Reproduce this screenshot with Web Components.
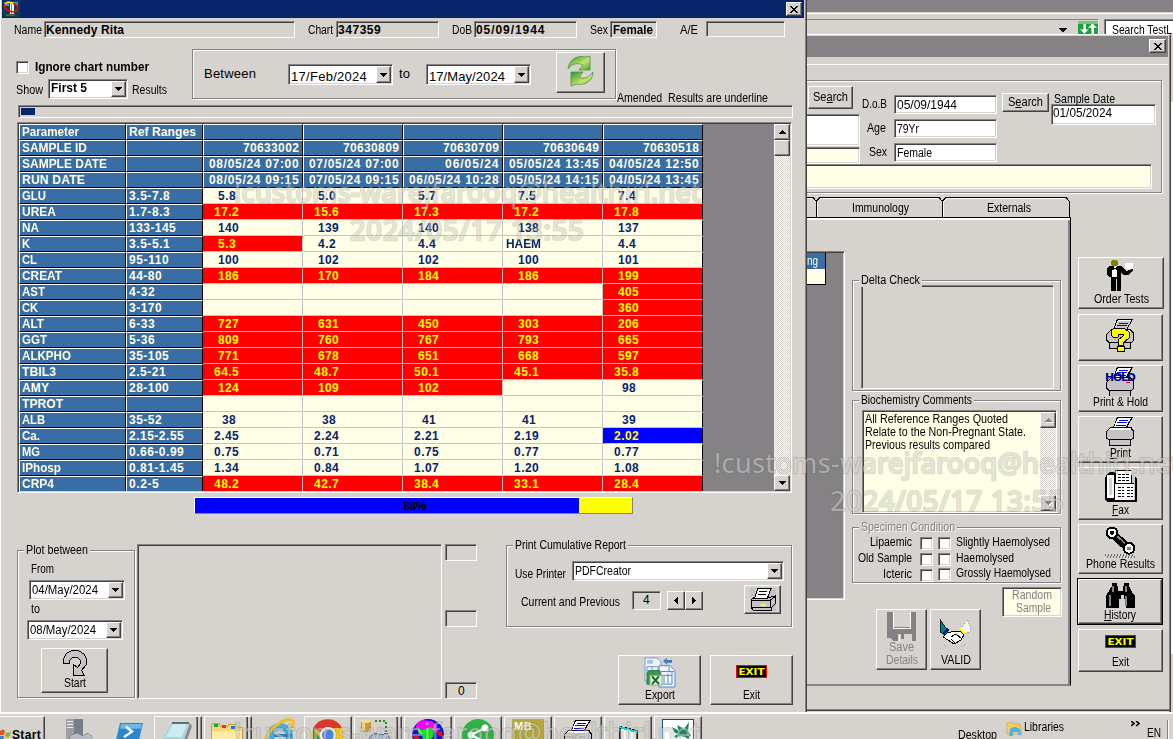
<!DOCTYPE html>
<html lang="en">
<head>
<meta charset="utf-8">
<title>Cumulative results</title>
<style>
html,body{margin:0;padding:0;width:1173px;height:739px;overflow:hidden;background:#d6d3ce;
font:12px/13px "Liberation Sans",sans-serif;color:#000}
</style>
</head>
<body>
<lab-desktop></lab-desktop>
<script>
const FACE='#d6d3ce',HI='#fff',SH='#848284',DK='#424142',NAVY='#08246b',BLUE='#396da5',IVORY='#ffffe7';
const BASE=`*,*::before{box-sizing:border-box}
:host{box-sizing:border-box;flex:none}
.row{display:flex;align-items:flex-start;flex:none}.col{display:flex;flex-direction:column;align-items:flex-start;flex:none}`;

/* b="margin-left margin-top width height" sets the flow box of any element */
function box(el){
  const b=el.getAttribute('b'); if(!b) return;
  const [l,t,w,h]=b.split(' ');
  el.style.marginLeft=l+'px'; el.style.marginTop=t+'px';
  if(w) el.style.width=w+'px'; if(h) el.style.height=h+'px';
}
function define(name,css,html){
  customElements.define(name,class extends HTMLElement{
    connectedCallback(){
      if(this.shadowRoot) return;
      box(this);
      const r=this.attachShadow({mode:'open'});
      r.innerHTML=`<style>${BASE}${css}</style>`+(typeof html==='function'?html(this):html);
      r.querySelectorAll('div[b]').forEach(box);
    }
  });
}
const sunk=`border:1px solid;border-color:${SH} ${HI} ${HI} ${SH};box-shadow:inset 1px 1px ${DK},inset -1px -1px ${FACE};`;
const raised=`background:${FACE};border:1px solid;border-color:${HI} ${DK} ${DK} ${HI};box-shadow:inset -1px -1px ${SH};`;

define('fit-label',`:host{display:block;white-space:pre;line-height:13px}span{display:inline-block;transform-origin:0 0}`,'<span><slot></slot></span>');
define('sunken-box',`:host{display:flex;align-items:flex-start;overflow:hidden;${sunk}}`,'<slot></slot>');
define('raised-button',`:host{display:flex;flex-direction:column;align-items:center;overflow:hidden;${raised}}
:host([focus]){outline:1px solid #000}`,'<slot></slot>');
define('group-frame',`:host{display:flex;flex-direction:column;align-items:flex-start;position:relative;border:1px solid ${SH};box-shadow:1px 1px ${HI},inset 1px 1px ${HI}}
.lg{position:absolute;left:6px;top:-7px;padding:0 2px;background:${FACE};height:13px}
:host([dim]) .lg{color:${SH};text-shadow:1px 1px #fff}
:host([across]){flex-direction:row}`,
 e=>(e.hasAttribute('legend')?`<div class="lg"><fit-label b="0 0 ${e.getAttribute('lw')}">${e.getAttribute('legend')}</fit-label></div>`:'')+'<slot></slot>');
define('check-box',`:host{display:block;background:#fff;${sunk}}`,'');
define('drop-list',`:host{display:flex;background:#fff;${sunk}padding:1px;overflow:hidden}
.t{flex:1;padding-left:1px}.bt{width:15px;height:100%;${raised}display:flex;align-items:center;justify-content:center;flex:none}`,
 '<div class="t"><slot></slot></div><div class="bt"><svg width="7" height="4" shape-rendering="crispEdges"><path d="M0 0h7v1H0zM1 1h5v1H1zM2 2h3v1H2zM3 3h1v1H3z"/></svg></div>');
define('arrow-button',`:host{display:flex;align-items:center;justify-content:center;${raised}}svg{fill:currentColor}
:host([dim]) svg{fill:${SH};filter:drop-shadow(1px 1px 0 #fff)}`,e=>{
 const p={up:'M3 0h1v1H3zM2 1h3v1H2zM1 2h5v1H1zM0 3h7v1H0z',down:'M0 0h7v1H0zM1 1h5v1H1zM2 2h3v1H2zM3 3h1v1H3z',
 left:'M0 3h1v1H0zM1 2h1v3H1zM2 1h1v5H2zM3 0h1v7H3z',right:'M3 3h1v1H3zM2 2h1v3H2zM1 1h1v5H1zM0 0h1v7H0z',
 close:'M0 0h2v1H0zM6 0h2v1H6zM1 1h2v1H1zM5 1h2v1H5zM2 2h4v1H2zM3 3h2v1H3zM2 4h4v1H2zM1 5h2v1H1zM5 5h2v1H5zM0 6h2v1H0zM6 6h2v1H6z'};
 const k=e.getAttribute('dir'),s={up:[7,4],down:[7,4],left:[4,7],right:[4,7],close:[8,7]}[k];
 return `<svg width="${s[0]}" height="${s[1]}" shape-rendering="crispEdges"><path d="${p[k]}"/></svg>`});
define('scroll-track',`:host{display:flex;flex-direction:column;background:conic-gradient(#fff 25%,${FACE} 0 50%,#fff 0 75%,${FACE} 0) 0 0/2px 2px}
.sp{flex:1}.th{height:16px;${raised}}`,
 e=>{const d=e.hasAttribute('dim')?'dim':'';return `<arrow-button ${d} dir="up" b="0 0 16 16"></arrow-button>${d?'':'<div class="th"></div>'}<div class="sp"></div><arrow-button ${d} dir="down" b="0 0 16 16"></arrow-button>`});

const printer=(o='')=>`<path d="M6 10h20l3 4v8l-3 2v6H4v-6l-3-2v-7z" fill="#000"/><path d="M6 11h19l3 4v6l-2 2H4l-2-2v-6z" fill="#c6c3c6"/><path d="M5 24h20v5H5z" fill="#c6c3c6"/><path d="M6 11h19l1 2H4z" fill="#fff"/><path d="M12 0h16l-6 11H8z" fill="#000"/><path d="M13 1h13l-5 9H9z" fill="#fff"/><path d="M14 3h9v1h-9zM12 5h10v1H12zM11 8h10v1H11z" fill="#00f"/><path d="M21 15h4v1h-4z" fill="red"/>${o}`;
const ICONS={
 app:['0 0 17 16',`<path d="M0 0h17v16H0z" fill="#084141"/><path d="M1 1h5v4H1zM10 1h5v4z" fill="#2aa59a"/><path d="M7 1h4v14H7z" fill="#fff"/><path d="M8 3h1v12H8z" fill="#848284"/><path d="M3 13h9v2H3z" fill="#555"/><ellipse cx="8" cy="6" rx="7" ry="4.3" fill="none" stroke="red" stroke-width="1.6" transform="rotate(20 8 6)"/><path d="M2 3l3-2 5 1" stroke="#ff0" fill="none" stroke-width="1.5"/>`],
 refresh:['0 0 27 32',`<defs><linearGradient id="g" x1="0" y1="0" x2="1" y2="1"><stop offset="0" stop-color="#2c9132"/><stop offset=".6" stop-color="#c4e76b"/><stop offset="1" stop-color="#3f9f38"/></linearGradient></defs><g fill="url(#g)" stroke="#399235" stroke-width=".7"><path d="M1 14C2 5 9 0 18 2l5-1v14H12l4-5C10 7 5 9 1 14z"/><path d="M26 17c0 9-8 14-17 12l-5 2V17h12l-4 5c6 3 10 0 14-5z"/></g>`],
 redo:['0 0 24 26',`<path d="M.5 13.500V8.500L3.500 3.500 8.500.500H15.500L21.500 4.500 23.500 9.500V14.500L18.500 20.500 21.500 25.500H10.500V14.500L14.500 17.500 17.500 13.500V10.500L14.500 7.500H9.500L6.500 10.500V13.500z" fill="#c6c3c6" stroke="#000"/>`],
 exit:['0 0 31 13',`<path d="M0 0h31v13H0z" fill="red"/><path d="M1 1h29v11H1z"/><text x="2.500" y="10" font-family="DejaVu Sans" font-weight="bold" font-size="9.500" textLength="26" lengthAdjust="spacingAndGlyphs" fill="#ff0">EXIT</text>`],
 smallprint:['0 0 26 23',`<path d="M0 0h26v23H0z" fill="#c6c3c6"/><path d="M1 12l4-3h16l4-1v8l-4 4v2H3l-2-3z" fill="#c6c3c6" stroke="#000"/><path d="M8 .5h13L17.500 10H4.500z" fill="#fff" stroke="#000"/><path d="M9 3.500h8M8 6.500h8" stroke="#000"/><path d="M1 12.500h19v7M20 12.500l5-4M2 19.500h18" fill="none" stroke="#000"/><path d="M11 16h5v2h-5z" fill="#ff0"/>`],
 export:['0 0 32 32',`<g stroke-width="1"><path d="M1 1h12l4 4v20H1z" fill="#eef5ff" stroke="#7a9cd0"/><path d="M3 6h6M3 4h6M3 10h11v8H3zM8 10v8M3 14h11" stroke="#6d93cc" fill="none"/><path d="M15 9h11l5 5v17H15z" fill="#eef5ff" stroke="#5b86c6"/><path d="M17 15h11v13H17zM20 20v7M24 17v10M17 19h11M25 10v5h5" stroke="#5b86c6" fill="none"/><path d="M3 17q1-3 5-3h8v14H3z" fill="#3f9a45" stroke="#2b7a35"/><path d="M6 19h12v10H6z" fill="#eaf6e6" stroke="#73b873"/><path d="M8 20l7 8M15 20l-7 8" stroke="#16602a" stroke-width="2"/><path d="M19 4l4-3v2h5v3h-5v2z" fill="#3e78cf"/></g>`],
 waiter:['0 0 28 33',`<path d="M5 1h5v1h1v4h-1v1H5V6H4V2h1z" fill="#848200"/><path d="M3 7h3l2 2 2-2h4l3 3 2 2 7-2v2l-5 4h-5l-2-2v18h-4v-12h-1v12H4V18H2L0 15V9z"/><path d="M6 8h4v10H5v-4z" fill="#fff"/><path d="M6 8h1v1h2V8h1v3H9v-1H7v1H6z"/><path d="M18 4h8v6h-8z" fill="#fff"/>`],
 print:['0 0 31 31',printer()],
 help:['0 0 31 33',printer(`<path d="M13 2h13l-5 9H9z" fill="#c6c3c6"/><path d="M14 4h9M12 6h10" stroke="#00f"/><path d="M6 16v-4l3-3h10l5 4v6l-6 5v2h-5v-5l5-4v-2h-4l-1 3H8z" fill="#ff0" stroke="#000"/><path d="M12 27h7v5h-7z" fill="#ff0" stroke="#000"/>`)],
 hold:['0 0 31 29',printer(`<text x="0" y="14" font-family="DejaVu Sans" font-weight="bold" font-size="11" textLength="31" fill="#000084">HOLD</text>`)],
 fax:['0 0 32 33',`<path d="M2 4l2-2h6V0h16v5l4 2 2 2v23H2L0 30V8z"/><path d="M2 5h7v23H2z" fill="#fff"/><path d="M4 8h3v17H4z" fill="#d6d3ce"/><path d="M11 1h15v12H11zM10 14h20v16H10z" fill="#fff"/><path d="M13 4h11M13 7h11M13 10h11M13 17h6M13 20h6M13 23h6M13 26h6M22 17h6M22 20h6M22 23h6M22 26h6" stroke="#000" stroke-dasharray="3 1"/><path d="M27 6h3v7h-3zM29 13h1v17h-1z" fill="#c6c3c6"/>`],
 phone:['0 0 31 33',`<path d="M7 7l17 17" stroke="#000" stroke-width="8"/><path d="M9 7l15 15" stroke="#848284" stroke-width="2"/><circle cx="7" cy="7" r="6.5"/><circle cx="7" cy="7" r="4.500" fill="#fff"/><circle cx="7" cy="7" r="2"/><circle cx="24" cy="23" r="6.5"/><circle cx="24" cy="23" r="4.500" fill="#fff"/><circle cx="24" cy="23" r="2" fill="#848284"/><path d="M0 30h30M2 32h28" stroke="#000" stroke-dasharray="1 2"/>`],
 binoc:['0 0 29 25',`<path d="M6 0h5v3h1v5h5V3h1V0h5v3l3 6 3 4v12h-9v-9h-2v-4h-3v4h-2v9H0V13l3-5 3-5z"/><path d="M6 3h2v6H6zM19 3h2v6h-2zM3 12h2v11H3zM19 13h2v10h-2z" fill="#848284"/>`],
 save:['0 0 29 29',`<path d="M0 0h6v15h17V0h6v29h-4v-7H11v7H6l-3-3H0z" fill="#848284"/><path d="M14 22h3v5h-3z" fill="#848284"/><path d="M6 0v16h17V0M12 23v6M29 1v28" stroke="#fff" fill="none"/>`],
 shake:['0 0 33 28',`<path d="M1 0l6 9 3 2-4 5-5-3z" fill="#008284" stroke="#000" stroke-width=".7"/><path d="M29 1l-7 8-2 3 4 4 8-4z" fill="#f5f5f5" stroke="#848284" stroke-width=".7" stroke-dasharray="1 1"/><path d="M8 14l8-2 5 0 4 4-3 5-7 4-6-4-5-3z" fill="#fff" stroke="#000"/><path d="M12 18l5-3 6 5M12 20l4 4" stroke="#000" fill="none"/><path d="M4 15l5-5" stroke="#00e" stroke-width="1.5"/><path d="M21 10l5 5" stroke="#ff0" stroke-width="2"/><path d="M4 25l4 3M27 25l-4 3" stroke="#bbb"/>`],
 swap:['0 0 20 14',`<path d="M0 0h20v14H0z" fill="#19a33b"/><path d="M0 0h20v3H0z" fill="#6ccd7c"/><path d="M5 2h3v6h3l-5 5-5-5h4zM13 13V7h-3l4-5 5 5h-3v6z" fill="#fff" stroke="#1a7a30" stroke-width=".4"/>`],
 server:['0 0 28 22',`<path d="M1 1h9v21H1z" fill="#9aa0a6"/><path d="M9 1h9v19H9z" fill="#777f88"/><path d="M2 3h6M2 6h6M2 9h6" stroke="#eee"/><path d="M6 17l6-2 6 3 4-3 6 4v3H4z" fill="#b6bac2" stroke="#666" stroke-width=".5"/>`],
 ps:['0 0 27 18',`<path d="M4 0h23l-4 18H0z" fill="#2c86cf"/><path d="M5 1h21l-1 5H4z" fill="#69b8ee"/><path d="M10 4l6 5-8 6" stroke="#fff" stroke-width="2.5" fill="none"/>`],
 note:['0 0 32 20',`<path d="M12 2h18l-5 18H2z" fill="#a8d4da"/><path d="M13 4h14l-5 13H6z" fill="#cdecef"/><path d="M12 2h17v2H12z" fill="#5c6f77"/><path d="M30 3l2 3-5 14h-3z" fill="#888"/>`],
 folder:['0 0 33 19',`<path d="M1 3l2-2h6l1 3h8l1-2h7l1 3h5v14H1z" fill="#f3d678" stroke="#c9a23c"/><path d="M2 9h30v10H2z" fill="#ffeba4"/><path d="M4 2h4v3H4z" fill="#1a3"/><path d="M12 3h4v3h-4z" fill="#d33"/><path d="M21 4h4v3h-4z" fill="#27c"/><path d="M5 17h22v2H5z" fill="#7fc7ec"/>`],
 ie:['0 0 34 22',`<circle cx="17" cy="18" r="13" fill="#43ace4"/><circle cx="17" cy="18" r="6" fill="#d6d3ce"/><path d="M11 16h18v3H11z" fill="#2183c8"/><path d="M2 22C8 8 24-2 30 3q2 3-3 8" fill="none" stroke="#f0bd22" stroke-width="3"/>`],
 chrome:['0 0 32 21',`<circle cx="16" cy="16" r="16" fill="#f9c41a"/><path d="M1 10a16 16 0 0 1 29-1H16a8 8 0 0 0-7 4z" fill="#d93a2f"/><path d="M1 9l9 13H1z" fill="#32944b"/><circle cx="16" cy="16" r="8" fill="#fff"/><circle cx="16" cy="16" r="6" fill="#4285e8"/>`],
 db:['0 0 30 21',`<path d="M1 1h10v12H1z" fill="#c99a32"/><path d="M2 2h3v10H2z" fill="#f1d68a"/><ellipse cx="6" cy="2" rx="5" ry="1.7" fill="#f4dc93"/><path d="M15 2h11v11" fill="none" stroke="#228b22" stroke-width="2" stroke-dasharray="2 2"/><path d="M10 18l5-4 6 2 6-2 3 6H9z" fill="#a9b8cc" stroke="#5f7490"/>`],
 globe:['0 0 32 21',`<circle cx="16" cy="16" r="16" fill="#0000e6"/><path d="M5 4l6-3 9 1 5 5-1 2 3 3-4 1-5-3-7 1-3-2-5 2z" fill="#f0f"/><path d="M6 8l4 3 9-3 3 4-1 6-3 3h-7l-1-5-4-2z" fill="#0e1"/><path d="M1 17h5l3 4H2zM24 13l6-1 1 6-4-1z" fill="#e01010"/>`],
 share:['0 0 32 21',`<circle cx="16" cy="16" r="16" fill="#2fb14a"/><path d="M23 9L9 16l14 7" stroke="#fff" stroke-width="2.5" fill="none"/><circle cx="23" cy="9" r="3.5" fill="#fff"/><circle cx="9" cy="16" r="3.5" fill="#fff"/>`],
 mb:['0 0 32 20',`<path d="M0 0h32v20H0z" fill="#b5a83c"/>`],
 doc:['0 0 19 15',`<path d="M1 1l17 4v10H1z" fill="#f4f4f4" stroke="#000" stroke-width="2"/><path d="M0 1l18 5" stroke="#0dd" stroke-width="2"/><path d="M9 5v10" stroke="#aaa"/>`],
 leaf:['0 0 32 21',`<path d="M0 0h32v21H0z" fill="#0c4f91"/><path d="M1 1h30v20H1z" fill="#fff"/><path d="M10 8l7 4-2-6 7 4 5-7-1 9 3 5-8-1-8-2z" fill="#128460"/><path d="M13 18q7-5 14 1" stroke="#128460" stroke-width="2.500" fill="none"/>`],
 lib:['0 0 16 15',`<path d="M1 2l5-1 2 2h6l2 10H1z" fill="#f4cf64" stroke="#caa037" stroke-width=".6"/><path d="M4 8q4-4 10 0l1 6h-3v-3H7v4H3z" fill="#4fb1e6"/>`],
 flag:['0 0 11 14',`<path d="M0 4q3-3 5 0l-1 4H0z" fill="#e8502c"/><path d="M6 5q3 2 5-1l-1 5q-3 2-5 0z" fill="#7cb83a"/><path d="M0 9h4l-1 5H0z" fill="#3d7ed2"/><path d="M5 10q2 1 4 0l-1 4H4z" fill="#f4c12b"/>`]
};
define('pix-icon',`:host{display:block;line-height:0}`,e=>{const i=ICONS[e.getAttribute('name')];
 const soft=/refresh|ie|chrome|share|globe|app|export|lib|flag|ps|note|leaf/.test(e.getAttribute('name'));
 return `<svg width="100%" height="100%" viewBox="${i[0]}" preserveAspectRatio="none" ${soft?'':'shape-rendering="crispEdges"'}>${i[1]}</svg>`});

/* cumulative results table: "!" marks a high value, "_" a low one */
const ROWS=[
 ['GLU','3.5-7.8','5.8','5.0','5.7','7.5','7.4'],
 ['UREA','1.7-8.3','!17.2','!15.6','!17.3','!17.2','!17.8'],
 ['NA','133-145','140','139','140','138','137'],
 ['K','3.5-5.1','!5.3','4.2','4.4','HAEM','4.4'],
 ['CL','95-110','100','102','102','100','101'],
 ['CREAT','44-80','!186','!170','!184','!186','!199'],
 ['AST','4-32','','','','','!405'],
 ['CK','3-170','','','','','!360'],
 ['ALT','6-33','!727','!631','!450','!303','!206'],
 ['GGT','5-36','!809','!760','!767','!793','!665'],
 ['ALKPHO','35-105','!771','!678','!651','!668','!597'],
 ['TBIL3','2.5-21','!64.5','!48.7','!50.1','!45.1','!35.8'],
 ['AMY','28-100','!124','!109','!102','','98'],
 ['TPROT','','','','','',''],
 ['ALB','35-52','38','38','41','41','39'],
 ['Ca.','2.15-2.55','2.45','2.24','2.21','2.19','_2.02'],
 ['MG','0.66-0.99','0.75','0.71','0.75','0.77','0.77'],
 ['IPhosp','0.81-1.45','1.34','0.84','1.07','1.20','1.08'],
 ['CRP4','0.2-5','!48.2','!42.7','!38.4','!33.1','!28.4']];
const NAMEW={Parameter:57,'SAMPLE ID':65,'SAMPLE DATE':85,'RUN DATE':63,GLU:24,UREA:34,NA:17,K:8,CL:15,CREAT:40,AST:23,CK:16,ALT:22,GGT:25,ALKPHO:49,TBIL3:34,AMY:27,TPROT:41,ALB:23,'Ca.':18,MG:18,IPhosp:39,CRP4:32};
const numW=s=>[...s].reduce((a,c)=>a+(/\d/.test(c)?7:c==='-'?5:4),0);
define('results-grid',`:host{display:grid;grid-template-columns:107px 77px repeat(5,100px);grid-auto-rows:16px;font-weight:bold;height:367px;overflow:hidden;align-content:start}
.f{background:${BLUE};color:${IVORY};border:1px solid;border-color:#fff #000 #000 #fff;padding-left:2px}
.f.r{display:flex;justify-content:flex-end;padding:0 3px 0 0}
.f fit-label,.d fit-label{line-height:14px}
.d{background:${IVORY};color:${NAVY};border:1px solid;border-color:transparent #c6c3c6 #c6c3c6 transparent;background-clip:border-box;line-height:14px}
.h{background:red;color:#ff0}.l{background:#00f;color:#ff0}.e{border-right-color:#000}`,()=>{
 let o='';
 const f=(t,w,r)=>`<div class="f${r?' r':''}">${t?`<fit-label b="0 0 ${w}">${t}</fit-label>`:''}</div>`;
 o+=f('Parameter',57)+f('Ref Ranges',67)+f('').repeat(5);
 [['SAMPLE ID','70633002','70630809','70630709','70630649','70630518'],
  ['SAMPLE DATE','08/05/24 07:00','07/05/24 07:00','06/05/24','05/05/24 13:45','04/05/24 12:50'],
  ['RUN DATE','08/05/24 09:15','07/05/24 09:15','06/05/24 10:28','05/05/24 14:15','04/05/24 13:45']]
 .forEach(r=>{o+=f(r[0],NAMEW[r[0]])+f('')+r.slice(1).map(v=>f(v,v.length===8&&!v.includes('/')?56:v.length===8?54:90,1)).join('')});
 ROWS.forEach(r=>{o+=f(r[0],NAMEW[r[0]])+f(r[1],numW(r[1]));
  r.slice(2).forEach((v,i)=>{const k=v[0]==='!'?'h':v[0]==='_'?'l':'';const t=v.replace(/^[!_]/,'');
   const pad=t==='HAEM'?2:[0,0,18,14,10][t.length],w=t==='HAEM'?35:numW(t);
   o+=`<div class="d ${k} ${i===4?'e':''}">${t?`<fit-label b="${pad} 0 ${w}">${t}</fit-label>`:''}</div>`})});
 return o});

define('history-dialog',`:host{position:absolute;left:0;top:0;width:807px;height:712px;display:flex;flex-direction:column;overflow:hidden;background:${FACE};border-right:1px solid ${DK};box-shadow:inset 1px 0 #fff,inset -1px 0 ${SH}}
.title{background:${NAVY};height:18px}.big{font-size:13px}.bold{font-weight:bold}
.bar{border:1px solid;border-color:#fff ${SH} ${SH} #fff;background:linear-gradient(90deg,#00f 384px,#ff0 0)}`,`
<div class="row title" b="2 0 802 18"><pix-icon name="app" b="1 1 17 16"></pix-icon><arrow-button dir="close" b="766 2 16 14"></arrow-button></div>
<div class="row" b="0 1 805 27">
 <fit-label b="14 5 28">Name</fit-label><sunken-box class="bold" b="2 2 251 17"><fit-label b="1 2 78">Kennedy Rita</fit-label></sunken-box>
 <fit-label b="13 5 25">Chart</fit-label><sunken-box class="bold" b="3 2 103 17"><fit-label b="1 2 43">347359</fit-label></sunken-box>
 <fit-label b="13 5 20">DoB</fit-label><sunken-box class="bold" b="2 2 103 17"><fit-label b="1 2 69">05/09/1944</fit-label></sunken-box>
 <fit-label b="13 5 18">Sex</fit-label><sunken-box class="bold" b="2 2 47 17"><fit-label b="2 2 40">Female</fit-label></sunken-box>
 <fit-label b="23 5 18">A/E</fit-label><sunken-box b="8 2 79 16"></sunken-box>
</div>
<div class="row" b="0 0 805 59">
 <div class="col" b="0 0 192 59">
  <div class="row bold" b="0 0 192 28"><check-box b="16 15 13 13"></check-box><fit-label b="6 15 114">Ignore chart number</fit-label></div>
  <div class="row"><fit-label b="16 10 27">Show</fit-label><drop-list class="bold" b="5 5 80 20"><fit-label b="0 1 36">First 5</fit-label></drop-list><fit-label b="4 10 35">Results</fit-label></div>
 </div>
 <group-frame across b="0 3 424 50">
  <fit-label class="big" b="11 17 52">Between</fit-label>
  <drop-list class="big" b="32 14 105 21"><fit-label b="0 4 76">17/Feb/2024</fit-label></drop-list>
  <fit-label class="big" b="6 17 11">to</fit-label>
  <drop-list class="big" b="16 14 105 21"><fit-label b="0 4 76">17/May/2024</fit-label></drop-list>
  <raised-button b="25 2 49 41"><pix-icon name="refresh" b="0 2 27 32"></pix-icon></raised-button>
 </group-frame>
 <fit-label b="1 46 151">Amended  Results are underline</fit-label>
</div>
<sunken-box b="18 0 775 13"><div style="background:${NAVY};width:14px;height:7px;margin:2px 0 0 2px"></div></sunken-box>
<sunken-box b="17 4 775 371" style="background:${SH}"><results-grid b="1 1 684"></results-grid><scroll-track b="71 1 16 367"></scroll-track></sunken-box>
<div class="row bar" b="194 4 439 17"><fit-label class="bold" b="208 2 23">88%</fit-label></div>
<div class="row" b="0 0 805 198">
 <group-frame b="17 36 118 148" legend="Plot between" lw="62">
  <fit-label b="13 12 23">From</fit-label>
  <drop-list b="11 4 96 20"><fit-label b="0 2 66">04/May/2024</fit-label></drop-list>
  <fit-label b="13 3 9">to</fit-label>
  <drop-list b="9 4 96 20"><fit-label b="0 2 66">08/May/2024</fit-label></drop-list>
  <raised-button b="23 8 67 45"><pix-icon name="redo" b="0 1 24 26"></pix-icon><fit-label b="0 1 22">Start</fit-label></raised-button>
 </group-frame>
 <sunken-box b="2 30 305 155"></sunken-box>
 <div class="col" b="3 0 32 198"><sunken-box b="0 30 32 17"></sunken-box><sunken-box b="0 49 32 17"></sunken-box><sunken-box b="0 55 32 17"><fit-label b="12 2 7">0</fit-label></sunken-box></div>
 <div class="col">
  <group-frame b="29 31 286 82" legend="Print Cumulative Report" lw="111">
   <div class="row" b="0 0 284 36"><fit-label b="8 22 51">Use Printer</fit-label><drop-list b="6 15 212 20"><fit-label b="0 2 56">PDFCreator</fit-label></drop-list></div>
   <div class="row"><fit-label b="14 14 99">Current and Previous</fit-label><sunken-box b="12 9 29 19"><fit-label b="10 2 7">4</fit-label></sunken-box>
    <arrow-button dir="left" b="6 9 18 19"></arrow-button><arrow-button dir="right" b="0 9 18 19"></arrow-button>
    <raised-button b="41 3 37 29"><pix-icon name="smallprint" b="0 2 26 23"></pix-icon></raised-button></div>
  </group-frame>
  <div class="row" b="141 28">
   <raised-button b="0 0 83 50"><pix-icon name="export" b="0 1 32 31"></pix-icon><fit-label b="0 1 30">Export</fit-label></raised-button>
   <raised-button b="9 0 83 50"><pix-icon name="exit" b="0 9 31 13"></pix-icon><fit-label b="0 11 17">Exit</fit-label></raised-button>
  </div>
 </div>
</div>`);

define('tab-head',`:host{display:block;position:relative}svg{position:absolute;left:0;top:0}`,e=>{const w=+e.getAttribute('b').split(' ')[2];
 return `<svg width="${w+1}" height="21" shape-rendering="crispEdges" fill="none"><path d="M.5 20V4L4 .5h${w-7}L${w} 4v16" stroke="#000"/><path d="M1.5 20V4.5L5 1.5h${w-9}" stroke="#fff"/></svg><slot></slot>`});
define('side-window',`:host{position:absolute;left:807px;top:34px;width:364px;height:678px;overflow:hidden;background:${FACE};display:flex;flex-direction:column;
 border-top:1px solid #fff;border-right:1px solid ${DK};box-shadow:inset -1px 0 ${SH}}
.title{background:${SH}}.w{background:#fff}.y{background:${IVORY}}.ctr{justify-content:center}
.line{background:linear-gradient(${SH} 1px,transparent 1px 8px,#fff 8px)}
.pat{border:1px solid ${SH};border-left:0;box-shadow:1px 1px #fff,inset 0 1px #fff}
.panel{border-top:1px solid #000;border-right:1px solid #000;border-bottom:2px solid ${SH};box-shadow:inset 0 2px #fff,inset -2px 0 ${SH}}
.ng{background:${BLUE};color:${IVORY};border-right:1px solid #000}.yl{background:${IVORY};border:solid #000;border-width:0 1px 1px 0}
.spec{display:grid;grid-template-columns:59px 16px 13px auto;column-gap:5px;grid-auto-rows:16px;margin:8px 0 0 0}
.spec>:nth-child(4n+1){justify-self:end}
.foot{background:linear-gradient(transparent 23px,${SH} 23px 24px,${DK} 24px 25px,transparent 25px)}`,`
<div class="row title" b="0 1 361 20"><arrow-button dir="close" b="342 3 17 14"></arrow-button></div>
<div class="line" b="0 0 361 9"></div>
<div class="row pat" b="0 15 355 113">
 <div class="col" b="0 0 55 111" style="margin-right:-55px">
  <raised-button b="1 5 45 23"><fit-label b="0 4 35">Se<u>a</u>rch</fit-label></raised-button>
  <sunken-box class="w" b="-4 5 57 32"></sunken-box><sunken-box class="y" b="-4 1 57 17"></sunken-box><sunken-box class="y" b="-4 0 349 25"></sunken-box>
 </div>
 <div class="col" b="55 0 135 82">
  <div class="row"><fit-label b="0 17 25">D.o.B</fit-label><sunken-box class="w" b="7 14 103 19"><fit-label b="2 3 60">05/09/1944</fit-label></sunken-box></div>
  <div class="row"><fit-label b="5 8 19">Age</fit-label><sunken-box class="w" b="8 5 103 19"><fit-label b="2 3 22">79Yr</fit-label></sunken-box></div>
  <div class="row"><fit-label b="7 8 18">Sex</fit-label><sunken-box class="w" b="7 5 103 19"><fit-label b="2 3 35">Female</fit-label></sunken-box></div>
 </div>
 <raised-button b="5 12 47 19"><fit-label b="0 2 35">S<u>e</u>arch</fit-label></raised-button>
 <div class="col"><fit-label b="5 12 61">Sample Date</fit-label><sunken-box class="w" b="2 -2 105 21"><fit-label b="1 2 59">01/05/2024</fit-label></sunken-box></div>
</div>
<div class="row" b="0 4 364 489">
 <div class="col" b="0 0 264 489">
  <div class="row" b="-12 0 276 20"><tab-head b="0 0 21 20"></tab-head><tab-head b="0 0 126 20"><fit-label b="36 5 57">Immunology</fit-label></tab-head><tab-head b="0 0 127 20"><fit-label b="45 5 44">Externals</fit-label></tab-head></div>
  <div class="row panel" b="0 0 264 469">
   <sunken-box b="-4 33 42 349" style="background:${SH}"><div class="col" b="2 1"><div class="row ng" b="0 0 20 16"><fit-label b="1 2 11">ng</fit-label></div><div class="yl" b="0 0 20 16"></div></div></sunken-box>
   <div class="col" b="7 0 210 466">
    <group-frame b="0 62 209 111" legend="Delta Check" lw="59"><sunken-box b="8 4 193 104"></sunken-box></group-frame>
    <group-frame b="0 9 209 114" legend="Biochemistry Comments" lw="111"><sunken-box class="y" b="9 9 195 103">
     <div class="col" b="2 2 176"><fit-label b="0 0 143">All Reference Ranges Quoted</fit-label><fit-label b="0 0 161">Relate to the Non-Pregnant State.</fit-label><fit-label b="0 0 125">Previous results compared</fit-label></div>
     <scroll-track dim b="-1 1 16 99"></scroll-track></sunken-box></group-frame>
    <group-frame dim b="0 13 209 56" legend="Specimen Condition" lw="94"><div class="spec">
     <fit-label b="0 0 42">Lipaemic</fit-label><check-box b="3 1 13 13"></check-box><check-box b="0 1 13 13"></check-box><fit-label b="0 0 94">Slightly Haemolysed</fit-label>
     <fit-label b="0 0 54">Old Sample</fit-label><check-box b="3 1 13 13"></check-box><check-box b="0 1 13 13"></check-box><fit-label b="0 0 58">Haemolysed</fit-label>
     <fit-label b="0 0 29">Icteric</fit-label><check-box b="3 1 13 13"></check-box><check-box b="0 0 13 13"></check-box><fit-label b="0 -1 95">Grossly Haemolysed</fit-label>
    </div></group-frame>
    <div class="row" style="color:${SH}">
     <raised-button b="24 26 51 61"><pix-icon name="save" b="0 2 29 29"></pix-icon><fit-label b="0 0 25">Save</fit-label><fit-label b="0 0 32">Details</fit-label></raised-button>
     <raised-button b="3 26 51 61" style="color:#000"><pix-icon name="shake" b="-1 9 33 28"></pix-icon><fit-label b="0 7 30">VALID</fit-label></raised-button>
     <sunken-box class="y ctr" b="21 4 60 30"><div class="col" style="align-items:center"><fit-label b="0 1 40">Random</fit-label><fit-label b="3 0 35">Sample</fit-label></div></sunken-box>
    </div>
   </div>
  </div>
 </div>
 <div class="col" b="7 0 86 489">
  <raised-button b="0 60 86 52"><pix-icon name="waiter" b="0 1 28 33"></pix-icon><fit-label b="0 1 55">Order Tests</fit-label></raised-button>
  <raised-button b="0 5 85 47"><pix-icon name="help" b="0 4 31 33"></pix-icon></raised-button>
  <raised-button b="0 4 85 47"><pix-icon name="hold" b="0 1 31 29"></pix-icon><fit-label b="0 0 55">Print &amp; Hold</fit-label></raised-button>
  <raised-button b="0 4 85 47"><pix-icon name="print" b="0 0 31 30"></pix-icon><fit-label b="0 0 21"><u>P</u>rint</fit-label></raised-button>
  <raised-button b="0 4 85 53"><pix-icon name="fax" b="0 2 32 33"></pix-icon><fit-label b="0 1 17"><u>F</u>ax</fit-label></raised-button>
  <raised-button b="0 4 85 50"><pix-icon name="phone" b="0 1 31 32"></pix-icon><fit-label b="0 0 69">Phone Results</fit-label></raised-button>
  <raised-button focus b="0 5 84 45"><pix-icon name="binoc" b="0 3 29 25"></pix-icon><fit-label b="0 1 32"><u>H</u>istory</fit-label></raised-button>
  <raised-button b="0 5 85 43"><pix-icon name="exit" b="0 5 31 13"></pix-icon><fit-label b="0 8 17">Exit</fit-label></raised-button>
 </div>
</div>
<div class="foot" b="0 0 364 26"></div>`);

define('main-shell',`:host{position:absolute;left:807px;top:0;width:366px;height:712px;display:flex;flex-direction:column;background:${FACE};overflow:hidden}
.t{background:linear-gradient(${SH} 12px,transparent 12px 13px,#fff 13px 14px,transparent 14px)}
.strip{background:linear-gradient(${FACE} 68px,#fff 68px 620px,${FACE} 620px);align-self:flex-end}
.cb{border:1px solid;border-color:${SH} #fff #fff transparent}.s{background:#fff;${sunk}}`,`
<div class="t" b="0 0 366 19"></div>
<div class="row" b="0 0 366 15"><div class="row cb" b="-1 0 293 20"><svg style="margin:8px 0 0 252px" width="8" height="4" shape-rendering="crispEdges"><path d="M0 0h8v1H0zM1 1h6v1H1zM2 2h4v1H2zM3 3h2v1H3z"/></svg><pix-icon name="swap" b="11 1 20 14"></pix-icon></div>
<div class="row s" b="5 0 80 20"><fit-label b="7 4 60">Search TestL</fit-label></div></div>
<div class="strip" b="0 0 2 678"></div>`);

define('task-slot',`:host{display:flex;justify-content:center;align-items:flex-start;height:24px;position:relative}
:host([up]){border:solid;border-width:1px 1px 0 1px;border-color:#fff ${DK} #fff #fff;box-shadow:inset -1px 0 ${SH}}
:host([twin]){border-right:1px solid ${DK};box-shadow:inset -1px 0 ${SH},inset -3px 0 ${FACE},inset -4px 0 ${DK},inset -5px 0 ${SH}}`,'<slot></slot>');
define('task-bar',`:host{position:absolute;left:0;top:712px;width:1173px;height:27px;display:flex;align-items:flex-start;overflow:hidden;background:${FACE};box-shadow:inset 0 2px #fff}
.bold{font-weight:bold}.mb{position:absolute;left:9px;top:3px;color:#fff;font-size:11px;font-weight:bold}`,`
<task-slot up b="-2 4 47 24" style="justify-content:flex-start"><pix-icon name="flag" b="1 10 11 14"></pix-icon><fit-label class="bold" b="1 12 29">Start</fit-label></task-slot>
<task-slot b="19 4 30"><pix-icon name="server" b="0 2 28 22"></pix-icon></task-slot>
<task-slot b="20 4 30"><pix-icon name="ps" b="0 7 27 17"></pix-icon></task-slot>
<task-slot up twin b="10 4 48"><pix-icon name="note" b="-4 3 32 20"></pix-icon></task-slot>
<task-slot up twin b="2 4 48"><pix-icon name="folder" b="-4 5 33 19"></pix-icon></task-slot>
<task-slot b="5 4 45"><pix-icon name="ie" b="0 2 34 22"></pix-icon></task-slot>
<task-slot up b="2 4 48"><pix-icon name="chrome" b="0 2 32 21"></pix-icon></task-slot>
<task-slot up twin b="2 4 48"><pix-icon name="db" b="-6 2 30 21"></pix-icon></task-slot>
<task-slot up b="2 4 48"><pix-icon name="globe" b="0 2 32 21"></pix-icon></task-slot>
<task-slot up b="2 4 48"><pix-icon name="share" b="0 2 32 21"></pix-icon></task-slot>
<task-slot up b="2 4 48"><pix-icon name="mb" b="0 2 32 21"></pix-icon><fit-label class="mb" b="0 0 18">MB</fit-label></task-slot>
<task-slot up b="2 4 48"><pix-icon name="print" b="0 3 31 30"></pix-icon></task-slot>
<task-slot up b="2 4 48"><pix-icon name="doc" b="0 9 19 15"></pix-icon></task-slot>
<task-slot up b="2 4 48"><pix-icon name="leaf" b="0 2 32 21"></pix-icon></task-slot>
<fit-label b="256 17 39">Desktop</fit-label><pix-icon name="lib" b="9 9 16 15"></pix-icon><fit-label b="2 9 40">Libraries</fit-label>
<svg style="margin:9px 0 0 67px;flex:none" width="9" height="6" fill="none" stroke="#000" stroke-width="1.6"><path d="M0 0l3 2.5L0 5M5 0l3 2.5L5 5"/></svg>
<fit-label b="7 15 14">EN</fit-label><div style="width:1px;height:20px;margin:8px 0 0 6px;background:${SH};box-shadow:1px 0 #fff"></div>`);

define('water-mark',`:host{position:absolute;pointer-events:none;font:27px/34px "Noto Sans",sans-serif;color:rgba(240,240,232,.42);-webkit-text-stroke:2.5px rgba(105,105,105,.24);paint-order:stroke fill}
fit-label{line-height:34px}`,e=>`<fit-label b="0 0 ${e.getAttribute('w')}"><slot></slot></fit-label>`);

define('lab-desktop',`:host{display:block;position:relative;width:1173px;height:739px;overflow:hidden;background:${FACE}}`,`
<main-shell></main-shell><side-window></side-window><history-dialog></history-dialog><task-bar></task-bar>
<water-mark w="467" style="left:234px;top:175px">!customs-warejfarooq@healthirl.net</water-mark>
<water-mark w="234" style="left:350px;top:213px">2024/05/17 13:55</water-mark>
<water-mark w="467" style="left:714px;top:446px">!customs-warejfarooq@healthirl.net</water-mark>
<water-mark w="234" style="left:830px;top:484px">2024/05/17 13:55</water-mark>
<water-mark w="467" style="left:234px;top:716px">!customs-warejfarooq@healthirl.net</water-mark>`);

/* fit each label to its width: narrow the glyphs when too wide, space them when too short */
(function fit(root){
  root.querySelectorAll('*').forEach(el=>{
    if(!el.shadowRoot) return;
    if(el.localName==='fit-label'){
      const s=el.shadowRoot.querySelector('span'),w=parseFloat(el.style.width);
      let n=el.textContent.length;
      const sl=el.querySelector('slot'); if(sl) n=sl.assignedNodes().map(x=>x.textContent).join('').length;
      const nat=s.getBoundingClientRect().width;
      if(w&&nat){
        if(nat>w) s.style.transform=`scaleX(${(w/nat).toFixed(4)})`;
        else if(n>1) s.style.letterSpacing=((w-nat)/(n-.5)).toFixed(3)+'px';
      }
    }
    fit(el.shadowRoot);
  });
})(document);
</script>
</body>
</html>
